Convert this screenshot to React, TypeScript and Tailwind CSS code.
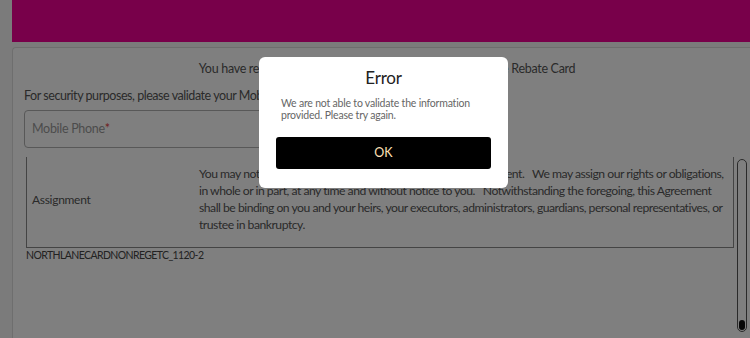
const font = { fontFamily: "Lato, 'Noto Sans', sans-serif" };

export default function App() {
  return (
    <div
      className="relative h-[338px] w-[750px] overflow-hidden bg-[#f6f6f6] text-[#555]"
      style={font}
    >
      <div className="ml-[12px] h-[42px] bg-[#f00094]" />

      <div className="ml-[12px] mt-[5px] h-[300px] rounded-tl-[4px] border-l border-t border-[#dcdcdc] bg-white pl-[11px]">
        <p className="mt-[12px] whitespace-nowrap text-center text-[12.5px] leading-[18px] tracking-[-0.3px]">
          You have received a Prepaid Mastercard linked to Northlane Rebate Card
        </p>
        <p className="mt-[9px] whitespace-nowrap text-[12.5px] leading-[18px] tracking-[-0.45px]">
          For security purposes, please validate your Mobile Phone number below
        </p>
        <div className="mt-[5px] flex h-[38px] w-[300px] items-center rounded-[4px] border border-[#b0b0b0] px-[7px] text-[12.5px] tracking-[-0.3px] text-[#999]">
          Mobile Phone<span className="text-[#e04040]">*</span>
        </div>

        <div className="mt-[9px] flex">
          <div className="flex flex-col">
            <div className="ml-[2px] flex h-[91px] w-[708px] border-x border-b border-[#888]">
              <div className="w-[172px] shrink-0 pl-[5px] pt-[34px] text-[12px] leading-[17px] tracking-[-0.3px]">
                Assignment
              </div>
              <div className="pt-[8px] whitespace-nowrap text-[12.2px] leading-[17px] tracking-[-0.5px]">
                <p>You may not assign your rights or obligations under this Agreement.&nbsp;&nbsp; We may assign our rights or obligations,</p>
                <p>in whole or in part, at any time and without notice to you.&nbsp;&nbsp; Notwithstanding the foregoing, this Agreement</p>
                <p>shall be binding on you and your heirs, your executors, administrators, guardians, personal representatives, or</p>
                <p>trustee in bankruptcy.</p>
              </div>
            </div>
            <p className="ml-[2px] text-[10.5px] leading-[14px] tracking-[-0.6px] text-[#444]">
              NORTHLANECARDNONREGETC_1120-2
            </p>
          </div>
          <div className="ml-[3px] mt-[2px] flex h-[173px] w-[10px] flex-col justify-end rounded-full border-[1.5px] border-[#555] p-[1px]">
            <div className="h-[10px] rounded-[3px] bg-[#111]" />
          </div>
        </div>
      </div>

      <div className="absolute inset-0 bg-black/50" />

      <div className="absolute left-[259px] top-[57px] w-[249px] rounded-[6px] bg-white px-[17px] pb-[19px] pt-[10px]">
        <h2 className="text-center text-[17px] leading-[22px] tracking-[-0.2px] text-[#222]">Error</h2>
        <p className="mt-[8px] px-[5px] text-[10.5px] leading-[12px] tracking-[-0.2px] text-[#666]">
          We are not able to validate the information provided. Please try again.
        </p>
        <button className="mt-[16px] h-[32px] w-full rounded-[3px] bg-black text-[12.5px] text-[#ffe2b8]">
          OK
        </button>
      </div>
    </div>
  );
}
